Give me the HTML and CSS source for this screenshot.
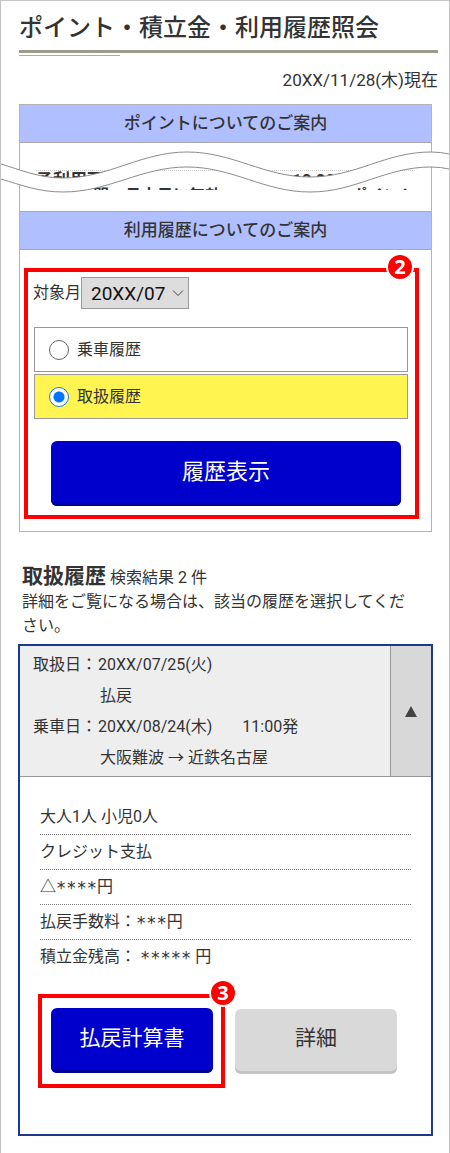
FILE: index.html
```
<!DOCTYPE html>
<html lang="ja">
<head>
    <meta charset="UTF-8">
    <meta name="viewport" content="width=device-width, initial-scale=1.0">
    <title>ポイント・積立金・利用履歴照会</title>
    <link rel="stylesheet" href="styles.css">
</head>
<body>
    <div class="page">
        <header class="page-header">
            <h1>ポイント・積立金・利用履歴照会</h1>
        </header>
        <p class="as-of">20XX/11/28(木)現在</p>

        <main>
            <section class="card">
                <h2>ポイントについてのご案内</h2>
                <div class="omitted">
                    <div class="omitted-row row-top"><span>予利用可能</span><span>10,000</span></div>
                    <div class="omitted-row row-bottom"><span>間：月末日に無効</span><span>ポイント</span></div>
                    <svg class="wave" viewBox="0 0 448 44" preserveAspectRatio="none" aria-hidden="true">
                        <path class="wave-fill" d="M0 14C20 20 38 28 62 28C108 28 140 2 186 2C232 2 263 27 309 27C355 27 384 2 430 2Q440 2 448 4V19Q440 17 430 17C384 17 355 42 309 42C263 42 232 17 186 17C140 17 108 42 62 42C38 42 20 35 0 29Z"/>
                        <path class="wave-line" d="M0 14C20 20 38 28 62 28C108 28 140 2 186 2C232 2 263 27 309 27C355 27 384 2 430 2Q440 2 448 4"/>
                        <path class="wave-line" d="M0 29C20 35 38 42 62 42C108 42 140 17 186 17C232 17 263 42 309 42C355 42 384 17 430 17Q440 17 448 19"/>
                    </svg>
                </div>
                <h2>利用履歴についてのご案内</h2>
                <form class="search marked">
                    <span class="badge">2</span>
                    <div class="month">
                        <label for="month">対象月</label>
                        <div class="select-wrap">
                            <select id="month">
                                <option>20XX/07</option>
                            </select>
                            <svg class="chevron" viewBox="0 0 12 8" aria-hidden="true"><path d="M1 1.5L6 6.5L11 1.5"/></svg>
                        </div>
                    </div>
                    <label class="option"><input type="radio" name="kind">乗車履歴</label>
                    <label class="option selected"><input type="radio" name="kind" checked>取扱履歴</label>
                    <button type="button" class="btn btn-primary btn-wide">履歴表示</button>
                </form>
            </section>

            <section class="results">
                <div class="results-head">
                    <h3>取扱履歴</h3>
                    <span>検索結果 2 件</span>
                </div>
                <p class="results-note">詳細をご覧になる場合は、該当の履歴を選択してください。</p>

                <article class="record">
                    <div class="record-head">
                        <dl>
                            <dt>取扱日：</dt>
                            <dd>20XX/07/25(火)</dd>
                            <dd class="sub">払戻</dd>
                            <dt>乗車日：</dt>
                            <dd>20XX/08/24(木)<span class="depart">11:00発</span></dd>
                            <dd class="sub">大阪難波 → 近鉄名古屋</dd>
                        </dl>
                        <button type="button" class="toggle" aria-label="閉じる">
                            <svg viewBox="0 0 12 11" aria-hidden="true"><path d="M6 0L12 11H0Z"/></svg>
                        </button>
                    </div>
                    <ul class="record-list">
                        <li>大人1人 小児0人</li>
                        <li>クレジット支払</li>
                        <li>△<span class="stars">****</span>円</li>
                        <li>払戻手数料：<span class="stars">***</span>円</li>
                        <li>積立金残高： <span class="stars">*****</span> 円</li>
                    </ul>
                    <div class="actions">
                        <div class="marked action-mark">
                            <span class="badge">3</span>
                            <button type="button" class="btn btn-primary">払戻計算書</button>
                        </div>
                        <button type="button" class="btn btn-plain">詳細</button>
                    </div>
                </article>
            </section>
        </main>
    </div>
</body>
</html>
```

FILE: styles.css
```
* {
    box-sizing: border-box;
}

body {
    margin: 0;
    background: #fff;
    color: #333;
    font-family: Roboto, "Noto Sans CJK JP", sans-serif;
    font-size: 16px;
    line-height: 24px;
}

h1, h2, h3, p, ul, dl, dd {
    margin: 0;
    padding: 0;
}

button, select {
    font-family: inherit;
    color: inherit;
}

.page {
    padding: 9px 11px 17px 17px;
    border: 1px solid #c4c4c4;
}

/* Title with a thick rule and a short thin one below */
.page-header {
    margin-left: 1px;
}

.page-header h1 {
    height: 43px;
    border-bottom: 3px solid #a09a8c;
    font-size: 24px;
    line-height: 36px;
    font-weight: 500;
    white-space: nowrap;
}

.page-header::after {
    content: "";
    display: block;
    width: 24%;
    height: 1px;
    margin-top: 2px;
    background: #b0aa9c;
}

.as-of {
    margin: 12px 0;
    font-size: 17px;
    text-align: right;
}

/* Guide card */
.card {
    margin: 0 6px 0 1px;
    border: 1px solid #b4b4b4;
}

.card h2 {
    height: 38px;
    border-bottom: 1px solid #a8a8a8;
    background: #b0bfff;
    font-size: 17px;
    line-height: 37px;
    font-weight: 500;
    text-align: center;
}

.omitted {
    position: relative;
    height: 69px;
    padding: 27px 16px 0;
    border-bottom: 1px solid #a8a8a8;
}

.omitted-row {
    display: flex;
    justify-content: space-between;
    overflow: hidden;
    height: 8px;
    font-size: 17px;
    font-weight: 700;
    line-height: 18px;
}

.row-top {
    padding-right: 70px;
    border-top: 1px dotted #ccc;
}

.row-bottom {
    height: 6px;
    margin-top: 6px;
    padding-left: 57px;
    font-size: 16px;
    line-height: 24px;
}

.wave {
    position: absolute;
    top: 7px;
    left: -19px;
    width: calc(100% + 37px);
    height: 44px;
}

.wave-fill {
    fill: #fff;
}

.wave-line {
    fill: none;
    stroke: #8c8c8c;
    stroke-width: 1;
}

/* Red frame with a numbered badge */
.marked {
    position: relative;
    border: 4px solid #f00;
}

.badge {
    position: absolute;
    top: -17px;
    right: 3px;
    width: 24px;
    height: 24px;
    border-radius: 50%;
    background: #f00;
    box-shadow: 0 0 0 2px #fff;
    color: #fff;
    font-family: "Open Sans", sans-serif;
    font-size: 20px;
    font-weight: 700;
    line-height: 24px;
    text-align: center;
}

/* Search form */
.search {
    display: flex;
    flex-direction: column;
    margin: 18px 12px 12px 4px;
    padding: 5px 7px 9px 6px;
}

.month {
    display: flex;
    align-items: center;
    margin: 0 0 18px -1px;
}

.select-wrap {
    position: relative;
}

.select-wrap select {
    appearance: none;
    width: 108px;
    height: 32px;
    padding: 0 20px 0 9px;
    border: 1px solid #999;
    border-radius: 0;
    background: #ddd;
    color: #111;
    font-size: 19px;
}

.chevron {
    position: absolute;
    top: 12px;
    right: 5px;
    width: 12px;
    height: 8px;
    fill: none;
    stroke: #444;
    pointer-events: none;
}

.option {
    display: flex;
    align-items: center;
    gap: 8px;
    height: 45px;
    margin-bottom: 2px;
    padding-left: 14px;
    border: 1px solid #999;
}

.option.selected {
    background: #fff450;
}

.option input {
    appearance: none;
    width: 20px;
    height: 20px;
    margin: 0;
    border: 1px solid #666;
    border-radius: 50%;
    background: #fff;
}

.option input:checked {
    border: 1px solid #2080d0;
    background: radial-gradient(circle, #0075ff 5px, #fff 6px);
}

.btn {
    height: 65px;
    padding: 0 0 10px;
    border: 0;
    border-radius: 6px;
    font-size: 21px;
    cursor: pointer;
}

.btn-primary {
    background: #0000cd;
    box-shadow: inset 0 -3px 0 #000096;
    color: #fff;
}

.btn-plain {
    background: #d9d9d9;
    box-shadow: inset 0 -3px 0 #c4c4c4;
}

.btn-wide {
    margin: 20px 7px 0 17px;
    font-size: 22px;
}

/* Search results */
.results {
    margin: 31px 5px 0 0;
}

.results-head {
    display: flex;
    align-items: baseline;
    gap: 4px;
    padding-left: 4px;
}

.results-head h3 {
    font-size: 21px;
    line-height: 26px;
}

.results-note {
    padding: 0 18px 0 4px;
}

.record {
    margin-top: 6px;
    border: 2px solid #1c3a8c;
}

.record-head {
    display: flex;
    border-bottom: 1px solid #999;
    background: #eee;
}

.record-head dl {
    display: grid;
    grid-template-columns: 65px 1fr;
    grid-auto-rows: 31px;
    flex: 1;
    padding: 4px 0 2px 13px;
    line-height: 30px;
    white-space: nowrap;
}

.record-head dd {
    grid-column: 2;
}

.record-head .sub {
    padding-left: 2px;
}

.depart {
    margin-left: 30px;
}

.toggle {
    display: flex;
    align-items: center;
    justify-content: center;
    width: 41px;
    padding: 0;
    border: 0;
    border-left: 1px solid #999;
    background: #d8d8d8;
}

.toggle svg {
    width: 12px;
    height: 11px;
    fill: #444;
}

.record-list {
    margin: 23px 20px 0;
    list-style: none;
}

.record-list li {
    height: 35px;
    line-height: 33px;
    border-bottom: 1px dotted #777;
}

.record-list li:last-child {
    border-bottom: 0;
}

.stars {
    font-family: "DejaVu Sans Mono", monospace;
    font-size: 17px;
    line-height: 16px;
    vertical-align: -2px;
}

.actions {
    display: grid;
    grid-template-columns: 187fr 162fr;
    align-items: center;
    gap: 10px;
    margin: 19px 34px 46px 18px;
}

.action-mark {
    display: flex;
    padding: 10px 8px 11px 9px;
}

.action-mark .btn {
    flex: 1;
}

.action-mark .badge {
    right: -14px;
}
```
